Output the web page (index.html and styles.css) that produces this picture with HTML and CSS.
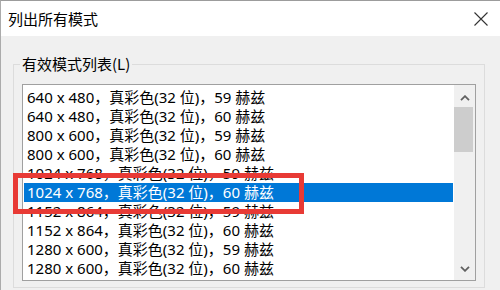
FILE: index.html
```html
<!DOCTYPE html>
<html lang="zh-CN">
<head>
<meta charset="utf-8">
<title>列出所有模式</title>
<link rel="stylesheet" href="styles.css">
</head>
<body>
<div class="window">
  <div class="titlebar">
    <span class="title">列出所有模式</span>
    <svg class="close" width="14" height="14" viewBox="0 0 14 14"><path d="M0.5 0.5 L13.5 13.5 M13.5 0.5 L0.5 13.5" stroke="#333" stroke-width="1.1" fill="none"/></svg>
  </div>
  <div class="content">
    <fieldset class="group">
      <legend class="group-label">有效模式列表(L)</legend>
      <div class="listbox">
        <div class="rows">
          <div class="row">640 x 480，真彩色(32 位)，59 赫兹</div>
          <div class="row">640 x 480，真彩色(32 位)，60 赫兹</div>
          <div class="row">800 x 600，真彩色(32 位)，59 赫兹</div>
          <div class="row">800 x 600，真彩色(32 位)，60 赫兹</div>
          <div class="row">1024 x 768，真彩色(32 位)，59 赫兹</div>
          <div class="row selected">1024 x 768，真彩色(32 位)，60 赫兹</div>
          <div class="row">1152 x 864，真彩色(32 位)，59 赫兹</div>
          <div class="row">1152 x 864，真彩色(32 位)，60 赫兹</div>
          <div class="row">1280 x 600，真彩色(32 位)，59 赫兹</div>
          <div class="row">1280 x 600，真彩色(32 位)，60 赫兹</div>
        </div>
        <div class="scrollbar">
          <div class="sb-btn sb-up"><svg width="10" height="6" viewBox="0 0 10 6"><path d="M1 5.2 L5 1.2 L9 5.2" stroke="#606060" stroke-width="1.8" fill="none"/></svg></div>
          <div class="sb-thumb"></div>
          <div class="sb-track"></div>
          <div class="sb-btn sb-down"><svg width="10" height="6" viewBox="0 0 10 6"><path d="M1 0.8 L5 4.8 L9 0.8" stroke="#606060" stroke-width="1.8" fill="none"/></svg></div>
        </div>
      </div>
    </fieldset>
  </div>
  <div class="highlight-box"></div>
</div>
</body>
</html>
```

FILE: styles.css
```css
html, body {
  margin: 0;
  padding: 0;
}
body {
  width: 500px;
  height: 290px;
  overflow: hidden;
  background: #f0f0f0;
  font-family: "Noto Sans", "Noto Sans CJK SC", sans-serif;
  font-size: 15px;
  color: #000;
}
.window {
  position: relative;
  width: 500px;
  height: 290px;
  box-sizing: border-box;
  border-left: 1px solid #ababab;
  border-top: 1px solid #9c9c9c;
  background: #f0f0f0;
}
.titlebar {
  height: 35px;
  background: #fff;
  display: flex;
  align-items: center;
  justify-content: space-between;
  padding: 0 12px 0 7px;
}
.title {
  font-family: "Noto Sans CJK SC", sans-serif;
  font-size: 15px;
  line-height: 20px;
  color: #000;
}
.close {
  display: block;
  margin-top: 1px;
}
.content {
  padding: 18px 0 0 12px;
}
.group {
  margin: 0;
  padding: 0 0 6px 0;
  width: 472px;
  box-sizing: border-box;
  border: 1px solid #dcdcdc;
  min-inline-size: 0;
}
.group-label {
  margin-left: 6px;
  padding: 0 2px;
  font-family: "Noto Sans CJK SC", sans-serif;
  font-size: 15px;
  line-height: 20px;
}
.listbox {
  display: flex;
  margin: 10px 0 0 8px;
  width: 454px;
  height: 197px;
  box-sizing: border-box;
  border: 1px solid #a0a0a0;
  background: #fff;
}
.rows {
  flex: 1;
  padding-top: 3px;
}
.row {
  height: 19px;
  line-height: 19px;
  margin: 0 1px;
  padding-left: 3px;
  white-space: nowrap;
}
.row.selected {
  background: #0078d7;
  color: #fff;
}
.scrollbar {
  width: 21px;
  display: flex;
  flex-direction: column;
  background: #f0f0f0;
}
.sb-btn {
  height: 22px;
  display: flex;
  justify-content: center;
}
.sb-up {
  align-items: flex-start;
  padding-top: 10px;
  height: 12px;
}
.sb-down {
  align-items: flex-start;
  padding-top: 8px;
  height: 14px;
}
.sb-btn svg {
  display: block;
}
.sb-thumb {
  height: 45px;
  margin-right: 2px;
  background: #cdcdcd;
}
.sb-track {
  flex: 1;
}
.highlight-box {
  position: absolute;
  left: 12px;
  top: 172px;
  width: 291px;
  height: 41px;
  box-sizing: border-box;
  border: 5px solid #e83a35;
}
```
